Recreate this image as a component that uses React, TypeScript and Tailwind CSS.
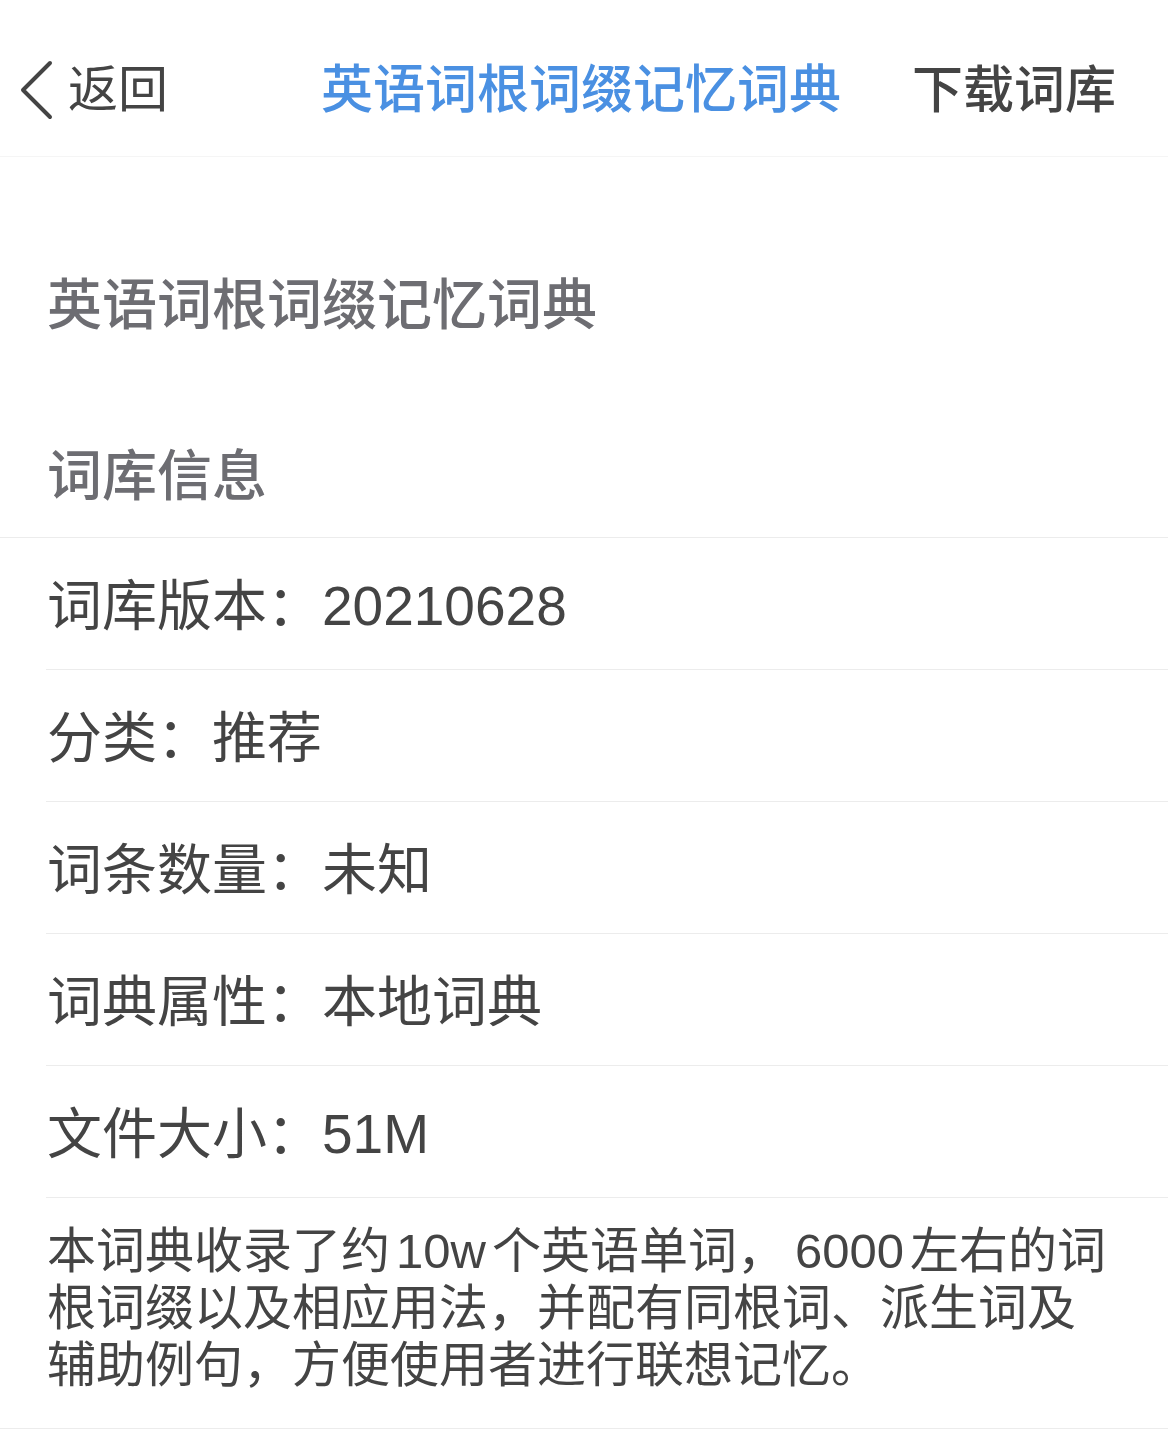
const font = { fontFamily: '"Liberation Sans", "Noto Sans CJK SC", sans-serif' };

const rows = [
  { label: '词库版本：', value: '20210628' },
  { label: '分类：', value: '推荐' },
  { label: '词条数量：', value: '未知' },
  { label: '词典属性：', value: '本地词典' },
  { label: '文件大小：', value: '51M' },
];

const BackIcon = () => (
  <svg width="34" height="60" viewBox="0 0 34 60" fill="none" className="shrink-0">
    <path d="M30 3 L3 30 L30 57" stroke="#444444" strokeWidth="4" strokeLinecap="round" strokeLinejoin="round" />
  </svg>
);

export default function App() {
  return (
    <div className="w-[1168px] min-h-[1429px] bg-white text-[#444444]" style={font}>
      {/* Nav bar */}
      <div className="h-[157px] border-b border-[#f5f5f5] flex items-center pt-[24px] px-[20px] relative">
        <button className="flex items-center gap-[14px] text-[50px] leading-none">
          <BackIcon />
          <span>返回</span>
        </button>
        <div className="absolute left-0 right-0 pr-[6px] text-center text-[52px] font-medium text-[#4a90e2] leading-none pointer-events-none">
          英语词根词缀记忆词典
        </div>
        <button className="ml-auto text-[51px] font-medium leading-none pr-[32px]">下载词库</button>
      </div>

      {/* Dictionary name */}
      <div className="pt-[120px] px-[47px] text-[55px] font-medium leading-[56px] text-[#6d6d72]">
        英语词根词缀记忆词典
      </div>

      {/* Section header */}
      <div className="mt-[115px] pb-[33px] px-[47px] text-[55px] font-medium leading-[56px] text-[#6d6d72] border-b border-[#ececec]">
        词库信息
      </div>

      {/* Info rows */}
      <div>
        {rows.map((r) => (
          <div key={r.label} className="ml-[46px] h-[132px] border-b border-[#ececec] flex items-center pt-[5px] pl-[1px] text-[55px] leading-none">
            <span>{r.label}</span>
            <span>{r.value}</span>
          </div>
        ))}
      </div>

      {/* Description */}
      <div className="pt-[25px] pb-[34px] px-[47px] text-[49px] leading-[57px] border-b border-[#ececec] whitespace-nowrap">
        <div>
          本词典收录了约<span className="mx-[6px]">10w</span>个英语单词，
          <span className="ml-[9px] mr-[6px]">6000</span>左右的词
        </div>
        <div>根词缀以及相应用法，并配有同根词、派生词及</div>
        <div>辅助例句，方便使用者进行联想记忆。</div>
      </div>
    </div>
  );
}
